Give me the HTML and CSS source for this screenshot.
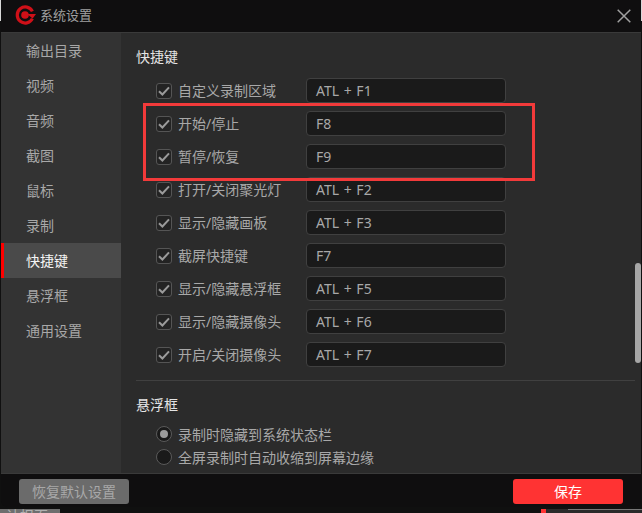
FILE: index.html
```html
<!DOCTYPE html>
<html lang="zh-CN">
<head>
<meta charset="utf-8">
<title>系统设置</title>
<link rel="stylesheet" href="styles.css">
</head>
<body>
<div class="window">
  <header class="titlebar">
    <svg class="logo" width="22" height="20" viewBox="0 0 22 20">
      <path d="M17.4 6.4A8 8 0 1 0 17.4 13.6" fill="none" stroke="#cf1018" stroke-width="3.2"/>
      <circle cx="10" cy="10" r="3.8" fill="#cf1018"/>
      <path d="M12 9h9l-3.4 4.6z" fill="#cf1018"/>
    </svg>
    <span class="title">系统设置</span>
    <svg class="close" width="14" height="14" viewBox="0 0 14 14">
      <path d="M.7.7l12.6 12.6M13.3.7L.7 13.3" stroke="#a0a0a0" stroke-width="1.5" fill="none"/>
    </svg>
  </header>
  <div class="main">
    <nav class="sidebar">
      <a class="nav-item">输出目录</a>
      <a class="nav-item">视频</a>
      <a class="nav-item">音频</a>
      <a class="nav-item">截图</a>
      <a class="nav-item">鼠标</a>
      <a class="nav-item">录制</a>
      <a class="nav-item active">快捷键</a>
      <a class="nav-item">悬浮框</a>
      <a class="nav-item">通用设置</a>
    </nav>
    <section class="content">
      <h2 class="heading">快捷键</h2>
      <div class="rows">
        <div class="row"><span class="check"><svg width="12" height="10" viewBox="0 0 12 10"><path d="M1 5.2l3.4 3.3L11 1.4" fill="none" stroke="#9a9a9a" stroke-width="2"/></svg></span><span class="label">自定义录制区域</span><span class="input">ATL + F1</span></div>
        <div class="row"><span class="check"><svg width="12" height="10" viewBox="0 0 12 10"><path d="M1 5.2l3.4 3.3L11 1.4" fill="none" stroke="#9a9a9a" stroke-width="2"/></svg></span><span class="label">开始/停止</span><span class="input">F8</span></div>
        <div class="row"><span class="check"><svg width="12" height="10" viewBox="0 0 12 10"><path d="M1 5.2l3.4 3.3L11 1.4" fill="none" stroke="#9a9a9a" stroke-width="2"/></svg></span><span class="label">暂停/恢复</span><span class="input">F9</span></div>
        <div class="row"><span class="check"><svg width="12" height="10" viewBox="0 0 12 10"><path d="M1 5.2l3.4 3.3L11 1.4" fill="none" stroke="#9a9a9a" stroke-width="2"/></svg></span><span class="label">打开/关闭聚光灯</span><span class="input">ATL + F2</span></div>
        <div class="row"><span class="check"><svg width="12" height="10" viewBox="0 0 12 10"><path d="M1 5.2l3.4 3.3L11 1.4" fill="none" stroke="#9a9a9a" stroke-width="2"/></svg></span><span class="label">显示/隐藏画板</span><span class="input">ATL + F3</span></div>
        <div class="row"><span class="check"><svg width="12" height="10" viewBox="0 0 12 10"><path d="M1 5.2l3.4 3.3L11 1.4" fill="none" stroke="#9a9a9a" stroke-width="2"/></svg></span><span class="label">截屏快捷键</span><span class="input">F7</span></div>
        <div class="row"><span class="check"><svg width="12" height="10" viewBox="0 0 12 10"><path d="M1 5.2l3.4 3.3L11 1.4" fill="none" stroke="#9a9a9a" stroke-width="2"/></svg></span><span class="label">显示/隐藏悬浮框</span><span class="input">ATL + F5</span></div>
        <div class="row"><span class="check"><svg width="12" height="10" viewBox="0 0 12 10"><path d="M1 5.2l3.4 3.3L11 1.4" fill="none" stroke="#9a9a9a" stroke-width="2"/></svg></span><span class="label">显示/隐藏摄像头</span><span class="input">ATL + F6</span></div>
        <div class="row"><span class="check"><svg width="12" height="10" viewBox="0 0 12 10"><path d="M1 5.2l3.4 3.3L11 1.4" fill="none" stroke="#9a9a9a" stroke-width="2"/></svg></span><span class="label">开启/关闭摄像头</span><span class="input">ATL + F7</span></div>
      </div>
      <hr class="divider">
      <h2 class="heading second">悬浮框</h2>
      <div class="radios">
        <div class="radio-row"><span class="radio on"></span><span>录制时隐藏到系统状态栏</span></div>
        <div class="radio-row"><span class="radio"></span><span>全屏录制时自动收缩到屏幕边缘</span></div>
      </div>
      <div class="scrollbar"></div>
    </section>
  </div>
  <footer class="footer">
    <button class="btn reset">恢复默认设置</button>
    <button class="btn save">保存</button>
  </footer>
</div>
<div class="strip">
  <span class="strip-text">认报页</span>
  <span class="strip-red"></span>
  <span class="strip-dark"><span class="strip-line"></span></span>
</div>
<div class="highlight"></div>
</body>
</html>
```
FILE: styles.css
```css
* { box-sizing: border-box; }
html, body { margin: 0; padding: 0; }
body {
  position: relative;
  width: 642px;
  height: 513px;
  overflow: hidden;
  background: linear-gradient(#d8d8d8 21px, #101010 21px);
  font-family: "Noto Sans", "Noto Sans CJK SC", sans-serif;
  font-size: 14px;
  color: #a8a8a8;
}
.window {
  margin-left: 1px;
  width: 640px;
  height: 507px;
  display: flex;
  flex-direction: column;
  border-radius: 0 0 6px 6px;
  overflow: hidden;
}
.titlebar {
  height: 33px;
  flex: none;
  display: flex;
  align-items: center;
  padding: 0 10px 2px 14px;
  background: #0f0e0f;
  border-bottom: 1px solid #3a3a3a;
}
.logo { flex: none; }
.title { margin-left: 3px; font-size: 13px; color: #a0a0a0; line-height: 18px; }
.close { margin-left: auto; position: relative; top: 1px; }
.main { flex: 1; min-height: 0; display: flex; }
.sidebar { width: 120px; flex: none; background: #333333; }
.nav-item {
  display: block;
  height: 35px;
  line-height: 35px;
  padding-left: 25px;
  color: #a8a8a8;
}
.nav-item.active {
  background: #4a4a4a;
  color: #f4f4f4;
  border-left: 3px solid #ff0000;
  padding-left: 22px;
}
.content {
  position: relative;
  flex: 1;
  overflow: hidden;
  background: #2b2b2b;
  padding-left: 15px;
}
.heading {
  margin: 0;
  font-size: 14px;
  font-weight: 400;
  line-height: 20px;
  color: #e4e4e4;
  padding-top: 14px;
  height: 45px;
}
.rows { display: flex; flex-direction: column; gap: 8px; padding-left: 20px; }
.row {
  display: grid;
  grid-template-columns: 16px 122px 200px;
  column-gap: 6px;
  align-items: center;
  height: 25px;
}
.check {
  width: 16px;
  height: 16px;
  display: flex;
  align-items: center;
  justify-content: center;
  background: #232323;
  border: 1px solid #555555;
  border-radius: 3px;
}
.label { white-space: nowrap; line-height: 20px; }
.input {
  height: 25px;
  line-height: 23px;
  padding-left: 9px;
  word-spacing: 1px;
  background: #1a1a1a;
  border: 1px solid #404040;
  border-radius: 4px;
}
.divider {
  margin: 13px 6px 0 0;
  border: 0;
  border-top: 1px solid #404040;
}
.radios { display: flex; flex-direction: column; gap: 7px; padding-left: 20px; }
.radio-row { display: flex; align-items: center; gap: 6px; height: 16px; white-space: nowrap; }
.radio {
  position: relative;
  width: 16px;
  height: 16px;
  flex: none;
  border-radius: 50%;
  background: #1a1a1a;
  border: 1px solid #5a5a5a;
}
.radio.on::after {
  content: "";
  position: absolute;
  left: 3px;
  top: 3px;
  width: 8px;
  height: 8px;
  border-radius: 50%;
  background: #9c9c9c;
}
.scrollbar {
  position: absolute;
  right: 0;
  top: 230px;
  width: 6px;
  height: 100px;
  border-radius: 3px;
  background: #a6a6a6;
}
.footer {
  height: 34px;
  flex: none;
  display: flex;
  justify-content: space-between;
  padding: 5px 18px 0 18px;
  background: #0f0e0f;
  border-top: 1px solid #3a3a3a;
}
.btn {
  width: 110px;
  height: 25px;
  padding: 0;
  border: 0;
  border-radius: 3px;
  font: inherit;
  line-height: 25px;
}
.reset { background: #6b6b6b; color: #a8a8a8; }
.save { background: #ff3333; color: #ffffff; }
.strip {
  height: 4px;
  margin-top: 2px;
  display: flex;
  overflow: hidden;
}
.strip-text {
  width: 60px;
  background: #6e6e6e;
  font-size: 14px;
  line-height: 14px;
  color: #b0b0b0;
  padding-left: 6px;
  white-space: nowrap;
  overflow: hidden;
}
.strip-red { width: 5px; margin-left: 481px; background: #ff3333; }
.strip-dark { flex: 1; background: #2a2a2a; padding-left: 22px; }
.strip-line { display: block; height: 1px; background: #777777; }
.highlight {
  position: absolute;
  left: 143px;
  top: 103px;
  width: 392px;
  height: 78px;
  border: 3px solid #f23a3a;
}
```
